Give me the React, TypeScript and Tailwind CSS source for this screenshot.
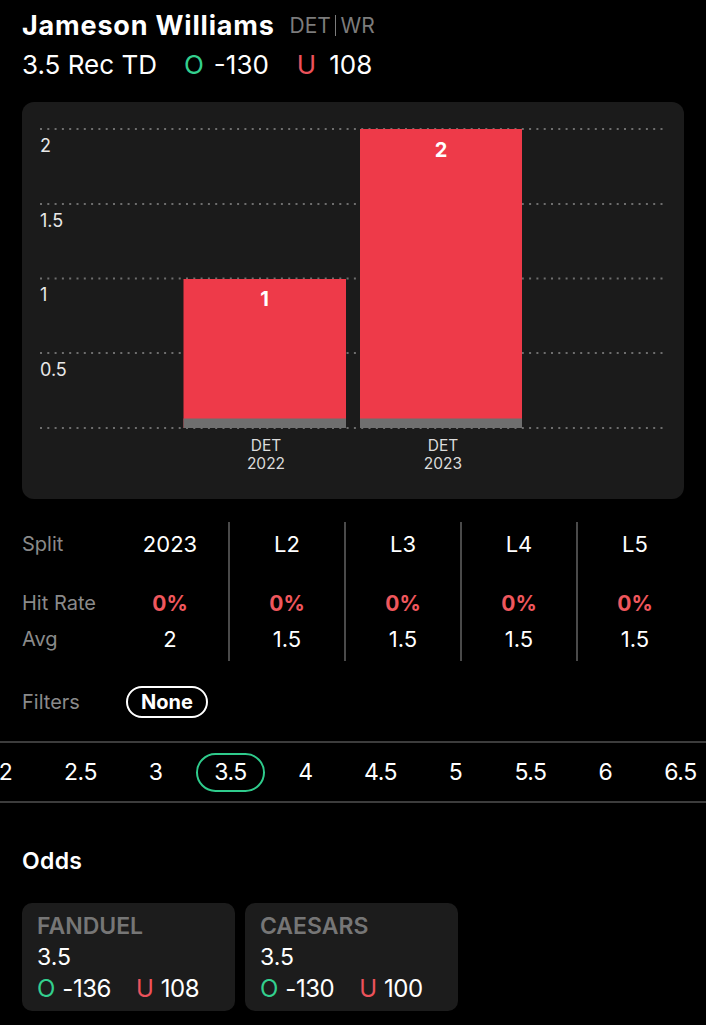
import React from "react";

const FONT = { fontFamily: "Inter, 'Noto Sans', sans-serif" };

function Chart() {
  const grid = [27, 102, 176.5, 251, 326];
  const labels = [
    { t: "2", y: 50 },
    { t: "1.5", y: 125 },
    { t: "1", y: 199 },
    { t: "0.5", y: 274 },
  ];
  return (
    <svg width="662" height="397" viewBox="0 0 662 397" className="block" style={FONT}>
      {grid.map((y) => (
        <line key={y} x1="18" x2="644" y1={y} y2={y} stroke="#6e6e6e" strokeWidth="2" strokeDasharray="2 5.3" />
      ))}
      {labels.map((l) => (
        <text key={l.t} x="18" y={l.y} fill="#e8e8e8" fontSize="18">
          {l.t}
        </text>
      ))}
      {/* bar 1 */}
      <rect x="161.5" y="177" width="162.5" height="149" fill="#ee3a49" />
      <rect x="161.5" y="316.5" width="162.5" height="9.5" fill="#6f6f6f" />
      <text x="242.5" y="204" textAnchor="middle" fill="#ffffff" fontSize="20" fontWeight="700">1</text>
      {/* bar 2 */}
      <rect x="338" y="27" width="162" height="299" fill="#ee3a49" />
      <rect x="338" y="316.5" width="162" height="9.5" fill="#6f6f6f" />
      <text x="419" y="55" textAnchor="middle" fill="#ffffff" fontSize="20" fontWeight="700">2</text>
      {/* x labels */}
      <text x="244" y="349" textAnchor="middle" fill="#dcdcdc" fontSize="15.5">DET</text>
      <text x="244" y="367" textAnchor="middle" fill="#dcdcdc" fontSize="15.5">2022</text>
      <text x="421" y="349" textAnchor="middle" fill="#dcdcdc" fontSize="15.5">DET</text>
      <text x="421" y="367" textAnchor="middle" fill="#dcdcdc" fontSize="15.5">2023</text>
    </svg>
  );
}

const cols = [
  { h: "2023", hit: "0%", avg: "2" },
  { h: "L2", hit: "0%", avg: "1.5" },
  { h: "L3", hit: "0%", avg: "1.5" },
  { h: "L4", hit: "0%", avg: "1.5" },
  { h: "L5", hit: "0%", avg: "1.5" },
];

const lines = ["2", "2.5", "3", "3.5", "4", "4.5", "5", "5.5", "6", "6.5"];

function OddsCard({ book, line, o, u }: { book: string; line: string; o: string; u: string }) {
  return (
    <div className="w-[213px] h-[108px] rounded-[10px] bg-[#1c1c1c] pl-[15px] pt-[8px]">
      <div className="h-[31px] flex items-center text-[23px] font-semibold text-[#767676] leading-none">{book}</div>
      <div className="h-[31px] flex items-center text-[23px] text-white leading-none">{line}</div>
      <div className="h-[31px] flex items-center text-[24px] leading-none text-white">
        <span className="text-[#33cf8e]">O</span>
        <span className="ml-[7px] tracking-[-0.5px]">{o}</span>
        <span className="ml-[25px] text-[#ec525b]">U</span>
        <span className="ml-[7px] tracking-[-0.5px]">{u}</span>
      </div>
    </div>
  );
}

export default function App() {
  return (
    <div className="w-[706px] h-[1025px] bg-black text-white overflow-hidden" style={FONT}>
      {/* header */}
      <div className="pl-[22px] pt-[9px]">
        <div className="h-[32px] flex items-center leading-none">
          <span className="text-[27px] font-bold tracking-[0.8px]">Jameson Williams</span>
          <span className="ml-[15px] text-[21px] text-[#7c7c7c] flex items-center">
            DET
            <span className="mx-[4px] inline-block w-[1.5px] h-[21px] bg-[#7c7c7c]" />
            WR
          </span>
        </div>
        <div className="mt-[8px] h-[32px] flex items-center leading-none text-[26px]">
          <span>3.5 Rec TD</span>
          <span className="ml-[27px] text-[#33cf8e]">O</span>
          <span className="ml-[10px]">-130</span>
          <span className="ml-[28px] text-[#ec525b]">U</span>
          <span className="ml-[13px]">108</span>
        </div>
      </div>

      {/* chart */}
      <div className="mx-[22px] mt-[21px] h-[397px] rounded-[12px] bg-[#1b1b1b] overflow-hidden">
        <Chart />
      </div>

      {/* stats */}
      <div className="mt-[23px] pl-[22px] flex">
        <div className="w-[90px] text-[20px] text-[#8a8a8a] leading-none">
          <div className="h-[44px] flex items-center">Split</div>
          <div className="h-[19px]" />
          <div className="h-[36px] flex items-center">Hit Rate</div>
          <div className="h-[36px] flex items-center">Avg</div>
        </div>
        {cols.map((c, i) => (
          <div
            key={c.h}
            className={
              "w-[116px] h-[139px] flex flex-col items-center leading-none" +
              (i > 0 ? " border-l-2 border-[#4a4a4a]" : "")
            }
          >
            <div className="h-[44px] flex items-center text-[22px] text-white">{c.h}</div>
            <div className="h-[19px]" />
            <div className="h-[36px] flex items-center text-[21px] font-bold text-[#ef575d]">{c.hit}</div>
            <div className="h-[36px] flex items-center text-[22px] text-white">{c.avg}</div>
          </div>
        ))}
      </div>

      {/* filters */}
      <div className="mt-[25px] pl-[22px] h-[32px] flex items-center leading-none">
        <span className="w-[104px] text-[20px] text-[#8a8a8a]">Filters</span>
        <span className="h-[32px] w-[82px] rounded-full border-2 border-white flex items-center justify-center text-[20px] font-bold">
          None
        </span>
      </div>

      {/* line selector */}
      <div className="mt-[23px] border-y-2 border-[#3c3c3c] h-[62px] overflow-hidden">
        <div className="flex h-full items-center ml-[-32px]">
          {lines.map((l) => (
            <div key={l} className="w-[75px] shrink-0 flex items-center justify-center">
              {l === "3.5" ? (
                <span className="w-[69px] h-[39px] rounded-full border-2 border-[#2fcb8c] flex items-center justify-center text-[23px] tracking-[-0.5px] leading-none">
                  {l}
                </span>
              ) : (
                <span className="text-[23px] tracking-[-0.5px] leading-none">{l}</span>
              )}
            </div>
          ))}
        </div>
      </div>

      {/* odds */}
      <div className="mt-[44px] pl-[22px] h-[28px] flex items-center text-[23px] font-semibold tracking-[0.3px] leading-none">Odds</div>
      <div className="mt-[28px] pl-[22px] flex gap-[10px]">
        <OddsCard book="FANDUEL" line="3.5" o="-136" u="108" />
        <OddsCard book="CAESARS" line="3.5" o="-130" u="100" />
      </div>
    </div>
  );
}
